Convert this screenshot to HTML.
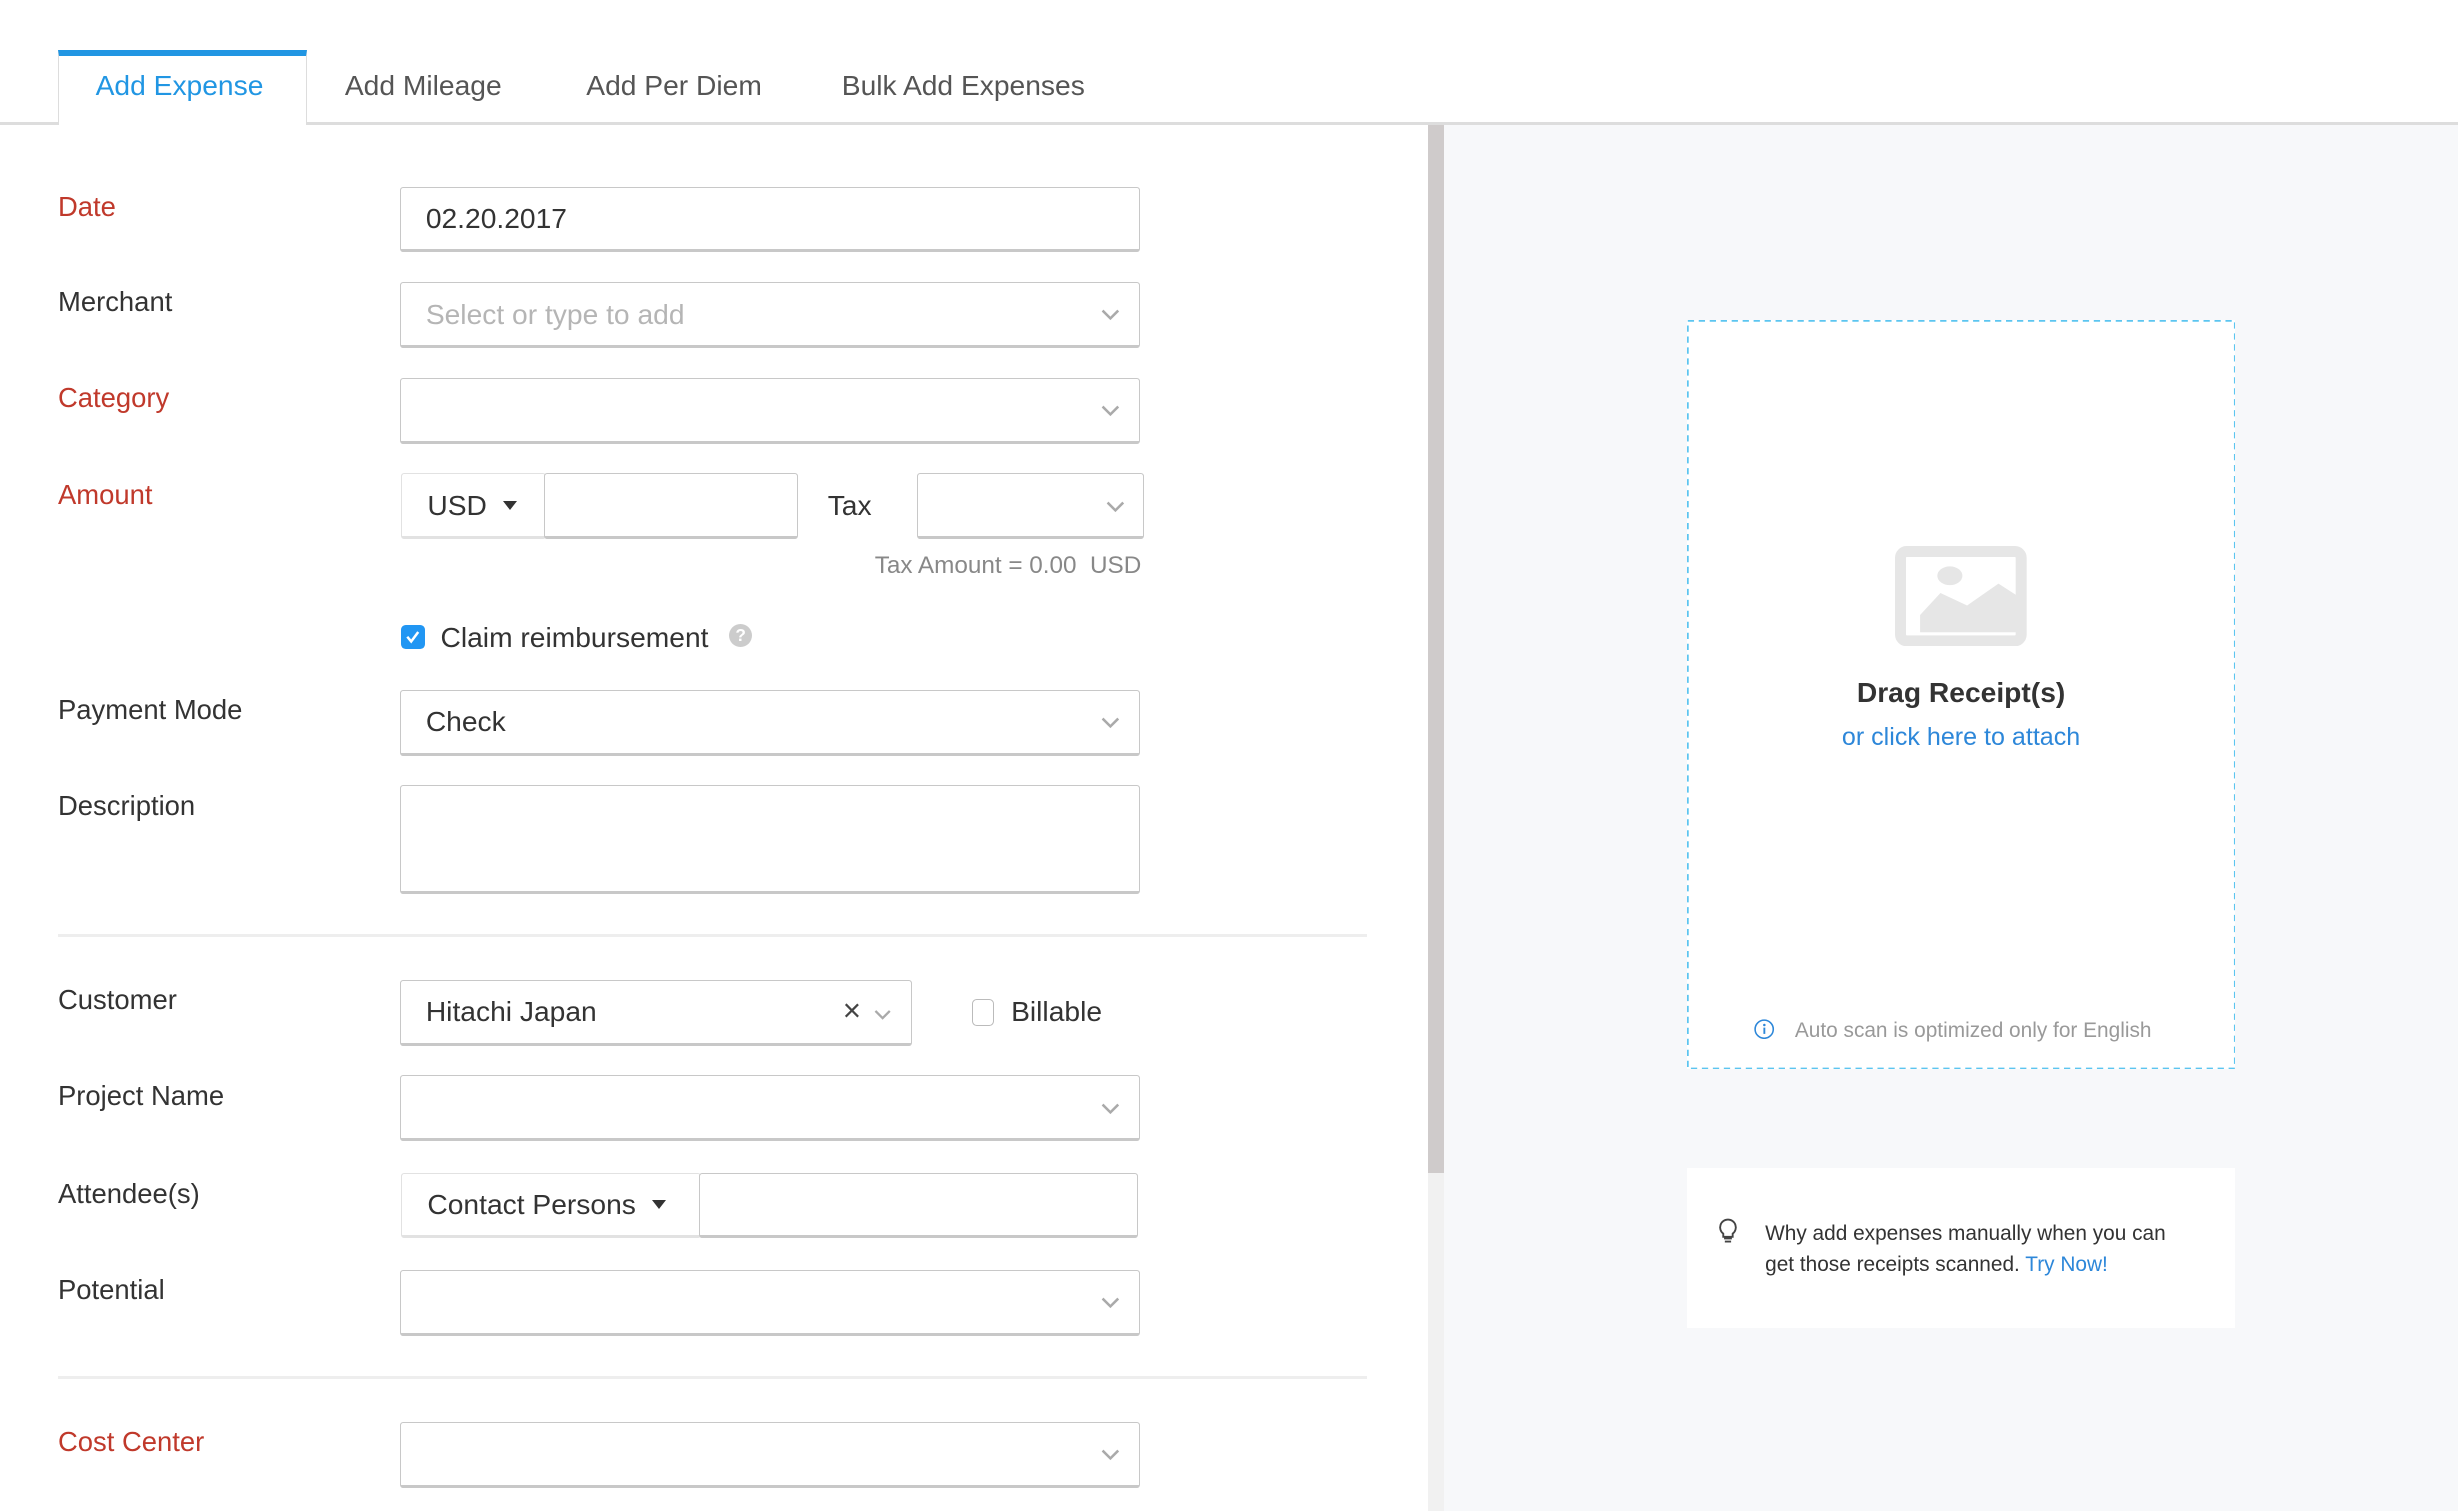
<!DOCTYPE html>
<html><head><meta charset="utf-8"><style>
html,body{margin:0;padding:0;}
html{width:2458px;height:1510px;overflow:hidden;background:#fff;}
body{zoom:1.5676;width:1568px;height:964px;position:relative;font-family:"Liberation Sans",sans-serif;color:#333;overflow:hidden;}
.a{position:absolute;}
.tab{position:absolute;top:44px;font-size:18px;color:#555;}
.lbl{position:absolute;left:37px;font-size:17.5px;color:#333;line-height:22px;}
.red{color:#c0392b;}
.box{position:absolute;border:1px solid #c8c8c8;border-bottom-width:2px;border-radius:2px;background:#fff;box-sizing:border-box;font-size:18px;color:#333;padding-left:16px;display:flex;align-items:center;}
.chev{position:absolute;right:12px;top:50%;margin-top:-3px;width:12px;height:8px;}
.hr{position:absolute;left:37px;width:835px;height:2px;background:#eee;}
.caret{display:inline-block;width:0;height:0;border-left:5px solid transparent;border-right:5px solid transparent;border-top:6px solid #333;margin-left:10px;}
</style></head><body>
<div class="a" style="left:0;top:78px;width:1568px;height:2px;background:#ddd"></div>
<div class="a" style="left:37px;top:32px;width:159px;height:48px;background:#fff;border-left:1px solid #ddd;border-right:1px solid #ddd;box-sizing:border-box;border-top:4px solid #2196e3"></div>
<div class="tab" style="left:61px;color:#2196e3">Add Expense</div>
<div class="tab" style="left:220px">Add Mileage</div>
<div class="tab" style="left:374px">Add Per Diem</div>
<div class="tab" style="left:537px">Bulk Add Expenses</div>
<div class="a" style="left:921px;top:80px;width:647px;height:884px;background:#f7f8fa"></div>
<div class="a" style="left:911px;top:80px;width:10px;height:668px;background:#cfcbcb"></div>
<div class="a" style="left:911px;top:748px;width:10px;height:216px;background:#f1f1f1"></div>

<div class="lbl red" style="top:121px">Date</div>
<div class="box" style="left:255px;top:119px;width:472px;height:42px">02.20.2017</div>

<div class="lbl" style="top:182px">Merchant</div>
<div class="box" style="left:255px;top:180px;width:472px;height:42px;color:#b5b5b5">Select or type to add<svg class="chev" viewBox="0 0 12 8"><path d="M1 1l5 5 5-5" fill="none" stroke="#aaa" stroke-width="1.6"/></svg></div>

<div class="lbl red" style="top:243px">Category</div>
<div class="box" style="left:255px;top:241px;width:472px;height:42px"><svg class="chev" viewBox="0 0 12 8"><path d="M1 1l5 5 5-5" fill="none" stroke="#aaa" stroke-width="1.6"/></svg></div>

<div class="lbl red" style="top:305px">Amount</div>
<div class="box" style="left:256px;top:302px;width:92px;height:42px;border-color:#e2e2e2">USD<span class="caret"></span></div>
<div class="box" style="left:347px;top:302px;width:162px;height:42px"></div>
<div class="a" style="left:528px;top:312px;font-size:18px">Tax</div>
<div class="box" style="left:585px;top:302px;width:145px;height:42px"><svg class="chev" viewBox="0 0 12 8"><path d="M1 1l5 5 5-5" fill="none" stroke="#aaa" stroke-width="1.6"/></svg></div>
<div class="a" style="left:558px;top:352px;font-size:15.5px;color:#888">Tax Amount = 0.00&nbsp;&nbsp;USD</div>

<div class="a" style="left:256px;top:399px;width:15px;height:15px;background:#2196f3;border-radius:3px"><svg width="15" height="15" viewBox="0 0 15 15" style="position:absolute;left:0;top:0"><path d="M4 7.5l2.5 3 4.5-6" fill="none" stroke="#fff" stroke-width="1.6"/></svg></div>
<div class="a" style="left:281px;top:396px;font-size:18px">Claim reimbursement</div>
<div class="a" style="left:465px;top:398px;width:15px;height:15px;border-radius:50%;background:#ccc;color:#fff;font-size:11px;text-align:center;line-height:15px;font-weight:bold">?</div>

<div class="lbl" style="top:442px">Payment Mode</div>
<div class="box" style="left:255px;top:440px;width:472px;height:42px">Check<svg class="chev" viewBox="0 0 12 8"><path d="M1 1l5 5 5-5" fill="none" stroke="#aaa" stroke-width="1.6"/></svg></div>

<div class="lbl" style="top:503px">Description</div>
<div class="box" style="left:255px;top:501px;width:472px;height:69px"></div>

<div class="hr" style="top:596px"></div>

<div class="lbl" style="top:627px">Customer</div>
<div class="box" style="left:255px;top:625px;width:327px;height:42px">Hitachi Japan
<span class="a" style="left:282px;top:8px;font-size:20px;color:#444">×</span>
<svg class="a" style="left:302px;top:18px" width="11" height="8" viewBox="0 0 12 8"><path d="M1 1l5 5 5-5" fill="none" stroke="#aaa" stroke-width="1.6"/></svg></div>
<div class="a" style="left:620px;top:637px;width:13px;height:16px;border:1px solid #bbb;border-radius:3px;background:#fff"></div>
<div class="a" style="left:645px;top:635px;font-size:18px">Billable</div>

<div class="lbl" style="top:688px">Project Name</div>
<div class="box" style="left:255px;top:686px;width:472px;height:42px"><svg class="chev" viewBox="0 0 12 8"><path d="M1 1l5 5 5-5" fill="none" stroke="#aaa" stroke-width="1.6"/></svg></div>

<div class="lbl" style="top:751px">Attendee(s)</div>
<div class="box" style="left:256px;top:748px;width:191px;height:42px;border-color:#e2e2e2">Contact Persons<span class="caret"></span></div>
<div class="box" style="left:446px;top:748px;width:280px;height:42px"></div>

<div class="lbl" style="top:812px">Potential</div>
<div class="box" style="left:255px;top:810px;width:472px;height:42px"><svg class="chev" viewBox="0 0 12 8"><path d="M1 1l5 5 5-5" fill="none" stroke="#aaa" stroke-width="1.6"/></svg></div>

<div class="hr" style="top:878px"></div>

<div class="lbl red" style="top:909px">Cost Center</div>
<div class="box" style="left:255px;top:907px;width:472px;height:42px"><svg class="chev" viewBox="0 0 12 8"><path d="M1 1l5 5 5-5" fill="none" stroke="#aaa" stroke-width="1.6"/></svg></div>

<div class="a" style="left:1076px;top:204px;width:350px;height:478px;background:#fff"></div>
<svg class="a" style="left:1076px;top:204px" width="350" height="478"><rect x="0.5" y="0.5" width="349" height="477" fill="none" stroke="#5cc5f0" stroke-width="1.2" stroke-dasharray="4 3"/></svg>
<svg class="a" style="left:1209px;top:348px" width="84" height="64" viewBox="0 0 84 64"><rect x="3.5" y="3.5" width="77" height="57" rx="4" fill="none" stroke="#e6e6e6" stroke-width="7"/><ellipse cx="35" cy="19" rx="8" ry="6" fill="#e6e6e6"/><path d="M16 44l13-14 17 8 20-14 14 9v22H16z" fill="#e6e6e6"/></svg>
<div class="a" style="left:1076px;width:350px;top:431px;text-align:center;font-size:18px;font-weight:bold;color:#333">Drag Receipt(s)</div>
<div class="a" style="left:1076px;width:350px;top:461px;text-align:center;font-size:16px;color:#2d87d9">or click here to attach</div>
<svg class="a" style="left:1119px;top:650px" width="13" height="13" viewBox="0 0 13 13"><circle cx="6.5" cy="6.5" r="5.8" fill="none" stroke="#2d87d9" stroke-width="1"/><rect x="6" y="5.5" width="1.2" height="4" fill="#2d87d9"/><circle cx="6.6" cy="3.8" r=".8" fill="#2d87d9"/></svg>
<div class="a" style="left:1145px;top:650px;font-size:13.3px;color:#999">Auto scan is optimized only for English</div>

<div class="a" style="left:1076px;top:745px;width:350px;height:102px;background:#fff"></div>
<svg class="a" style="left:1095px;top:777px" width="14" height="16" viewBox="0 0 14 16"><path d="M7 1a5 5 0 0 0-3 9v2h6v-2a5 5 0 0 0-3-9z" fill="none" stroke="#444" stroke-width="1.2"/><path d="M4.5 13h5M5 15h4" stroke="#444" stroke-width="1.2"/></svg>
<div class="a" style="left:1126px;top:777px;font-size:13.3px;color:#333;line-height:20px">Why add expenses manually when you can<br>get those receipts scanned. <span style="color:#2d87d9">Try Now!</span></div>
</body></html>
